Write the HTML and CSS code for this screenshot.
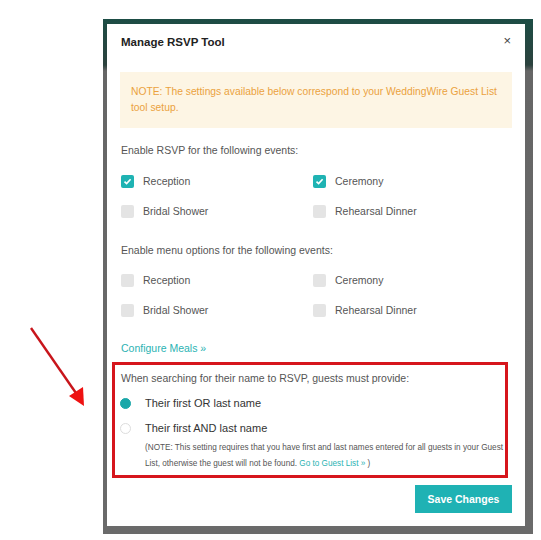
FILE: index.html
```html
<!DOCTYPE html>
<html lang="en">
<head>
  <meta charset="UTF-8">
  <meta name="viewport" content="width=device-width, initial-scale=1.0">
  <title>Manage RSVP Tool</title>
  <link rel="stylesheet" href="styles.css">
</head>
<body>
  <!-- annotation arrow pointing at the highlighted block -->
  <svg class="arrow" width="70" height="90" viewBox="0 0 70 90">
    <line x1="3" y1="2" x2="50" y2="70" stroke="#c8151b" stroke-width="2.4"/>
    <polygon points="56,80 41,70 55,61" fill="#ee1111"/>
  </svg>

  <div class="frame">
    <div class="modal">
      <div class="modal-header">
        <h2>Manage RSVP Tool</h2>
        <span class="close">&times;</span>
      </div>

      <div class="modal-body">
        <div class="note">NOTE: The settings available below correspond to your WeddingWire Guest List<br>tool setup.</div>

        <!-- RSVP events -->
        <p class="section-label">Enable RSVP for the following events:</p>
        <div class="options">
          <label class="check checked"><span class="box"><svg width="9" height="9" viewBox="0 0 9 9"><path d="M1.5 4.6 L3.6 6.6 L7.6 2.2" fill="none" stroke="#fff" stroke-width="1.6"/></svg></span>Reception</label>
          <label class="check checked"><span class="box"><svg width="9" height="9" viewBox="0 0 9 9"><path d="M1.5 4.6 L3.6 6.6 L7.6 2.2" fill="none" stroke="#fff" stroke-width="1.6"/></svg></span>Ceremony</label>
          <label class="check"><span class="box"></span>Bridal Shower</label>
          <label class="check"><span class="box"></span>Rehearsal Dinner</label>
        </div>

        <!-- Menu options -->
        <p class="section-label">Enable menu options for the following events:</p>
        <div class="options">
          <label class="check"><span class="box"></span>Reception</label>
          <label class="check"><span class="box"></span>Ceremony</label>
          <label class="check"><span class="box"></span>Bridal Shower</label>
          <label class="check"><span class="box"></span>Rehearsal Dinner</label>
        </div>

        <a class="link meals" href="#">Configure Meals &raquo;</a>

        <!-- name search setting -->
        <div class="search-box">
          <p class="section-label">When searching for their name to RSVP, guests must provide:</p>
          <label class="radio selected"><span class="dot"></span>Their first OR last name</label>
          <label class="radio"><span class="dot"></span>Their first AND last name</label>
          <p class="small-note">(NOTE: This setting requires that you have first and last names entered for all guests in your Guest List, otherwise the guest will not be found. <a class="link" href="#">Go to Guest List &raquo;</a> )</p>
        </div>

        <div class="actions">
          <button class="save">Save Changes</button>
        </div>
      </div>
    </div>
  </div>
</body>
</html>
```

FILE: styles.css
```css
body {
  margin: 0;
  padding: 19px 0 0 103px;
  background: #fff;
  font-family: "Liberation Sans", Arial, sans-serif;
  color: #555;
  position: relative;
}

.arrow {
  position: absolute;
  left: 28px;
  top: 326px;
}

/* dimmed page behind the dialog */
.frame {
  width: 418px;
  padding: 5px 8px 8px 4px;
  background: linear-gradient(to bottom, #1d4d45 0, #2c423e 46px, #666 52px, #6a6a6a 100%);
}

.modal {
  background: #fff;
  height: 502px;
}

.modal-header {
  display: flex;
  justify-content: space-between;
  align-items: center;
  padding: 6px 14px 0 14px;
  height: 24px;
}
.modal-header h2 {
  margin: 0;
  font-size: 11.5px;
  font-weight: bold;
  color: #222;
}
.close {
  font-size: 13px;
  color: #444;
  margin-top: -4px;
}

.modal-body {
  padding: 18px 13px 0 13px;
}

.note {
  background: #fdf5e4;
  color: #eba23e;
  font-size: 10.3px;
  line-height: 16px;
  padding: 12px 4px 12px 11px;
  white-space: nowrap;
}

.section-label {
  margin: 0;
  padding-left: 1px;
  font-size: 10.5px;
  line-height: 14px;
  color: #555;
}
.modal-body > .section-label {
  margin-top: 15px;
}

.options {
  display: grid;
  grid-template-columns: 192px 1fr;
  row-gap: 16px;
  margin-top: 17px;
  padding-left: 1px;
}
.check {
  display: flex;
  align-items: center;
  gap: 9px;
  font-size: 10.5px;
  line-height: 14px;
  color: #555;
}
.box {
  width: 13px;
  height: 13px;
  border-radius: 2px;
  background: #e4e4e4;
  display: flex;
  align-items: center;
  justify-content: center;
}
.checked .box {
  background: #1fb3b3;
}
.modal-body > .options + .section-label {
  margin-top: 25px;
}
.options + .section-label + .options {
  margin-top: 16px;
}

.link {
  color: #2bb3b3;
  text-decoration: none;
}
.meals {
  display: block;
  margin-top: 24px;
  padding-left: 1px;
  font-size: 10.5px;
  line-height: 14px;
}

.search-box {
  margin: 7px 4px 0 -8px;
  border: 3px solid #d6161d;
  padding: 6px 0 3px 5px;
}
.radio {
  display: flex;
  align-items: center;
  gap: 14px;
  font-size: 11px;
  line-height: 14px;
  color: #333;
  margin-top: 11px;
}
.radio + .radio {
  margin-top: 11px;
}
.dot {
  width: 9px;
  height: 9px;
  border-radius: 50%;
  border: 1px solid #ddd;
  background: #fff;
}
.selected .dot {
  background: #1aa7a9;
  border-color: #1aa7a9;
}
.small-note {
  margin: 5px 0 0 25px;
  font-size: 8.2px;
  line-height: 16px;
  color: #555;
}

.actions {
  display: flex;
  justify-content: flex-end;
  margin-top: 7px;
}
.save {
  width: 97px;
  height: 28px;
  border: none;
  background: #1fb2b4;
  color: #fff;
  font-family: inherit;
  font-weight: bold;
  font-size: 10.5px;
  padding: 0;
}
```
